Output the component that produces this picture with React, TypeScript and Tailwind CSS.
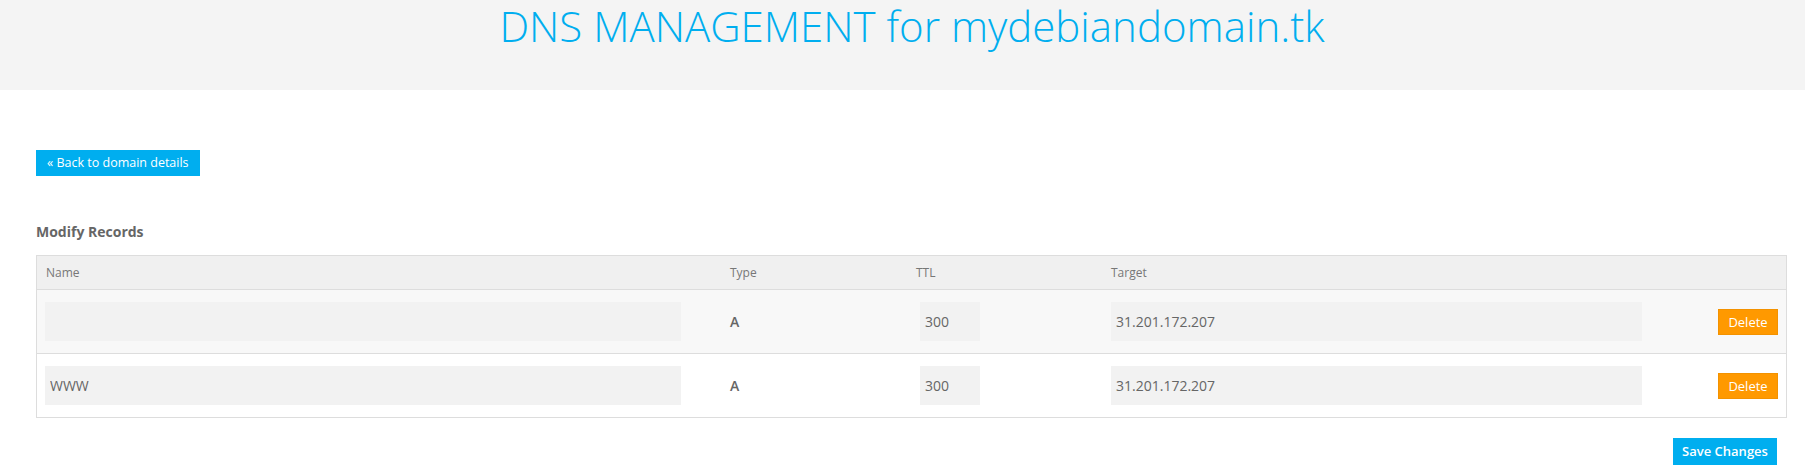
import React from "react";

const rows = [
  { name: "", type: "A", ttl: "300", target: "31.201.172.207" },
  { name: "WWW", type: "A", ttl: "300", target: "31.201.172.207" },
];

const font = { fontFamily: '"Open Sans", "Noto Sans", sans-serif' };

export default function App() {
  return (
    <div className="min-h-[476px] bg-white" style={font}>
      <div className="h-[90px] bg-[#f4f4f4] pt-[5px]">
        <h1 className="pl-[19px] text-center text-[42px] font-light leading-[42px] text-[#00aeef]">
          DNS MANAGEMENT for mydebiandomain.tk
        </h1>
      </div>

      <div className="pl-[36px] pr-[18px]">
        <div className="mt-[59px]">
          <button className="h-[26px] bg-[#00aeef] px-[11px] text-[12.5px] leading-[26px] text-white">
            « Back to domain details
          </button>
        </div>

        <h2 className="mt-[46px] text-[14px] font-bold leading-[20px] text-[#666]">Modify Records</h2>

        <div className="mt-[13px] border border-[#dddddd]">
          <div className="grid h-[34px] grid-cols-[683px_186px_195px_1fr_120px] items-center border-b border-[#dddddd] bg-[#f0f0f0] text-[12px] text-[#777]">
            <div className="pl-[9px]">Name</div>
            <div className="pl-[10px]">Type</div>
            <div className="pl-[10px]">TTL</div>
            <div className="pl-[10px]">Target</div>
            <div />
          </div>
          {rows.map((r, i) => (
            <div
              key={i}
              className={
                "grid grid-cols-[683px_186px_195px_1fr_120px] items-center py-[12px] text-[14px] text-[#666] " +
                (i === 0 ? "border-b border-[#dddddd] bg-[#f8f8f8]" : "bg-white")
              }
            >
              <div className="pl-[8px]">
                <input
                  readOnly
                  defaultValue={r.name}
                  className="block h-[39px] w-[636px] bg-[#f2f2f2] px-[5px] text-[14px] text-[#666] outline-none"
                />
              </div>
              <div className="pl-[10px] font-semibold">{r.type}</div>
              <div className="pl-[14px]">
                <input
                  readOnly
                  defaultValue={r.ttl}
                  className="block h-[39px] w-[60px] bg-[#f2f2f2] px-[5px] text-[14px] text-[#666] outline-none"
                />
              </div>
              <div className="pl-[10px]">
                <input
                  readOnly
                  defaultValue={r.target}
                  className="block h-[39px] w-[531px] bg-[#f2f2f2] px-[5px] text-[14px] text-[#666] outline-none"
                />
              </div>
              <div className="flex justify-end pr-[8px]">
                <button className="h-[26px] w-[60px] border border-[#f39200] bg-[#ff9900] text-[13px] leading-[24px] text-white">
                  Delete
                </button>
              </div>
            </div>
          ))}
        </div>

        <div className="mt-[20px] flex justify-end pr-[10px]">
          <button className="h-[27px] w-[104px] bg-[#00aeef] text-[13px] font-semibold leading-[27px] text-white">
            Save Changes
          </button>
        </div>
      </div>
    </div>
  );
}
